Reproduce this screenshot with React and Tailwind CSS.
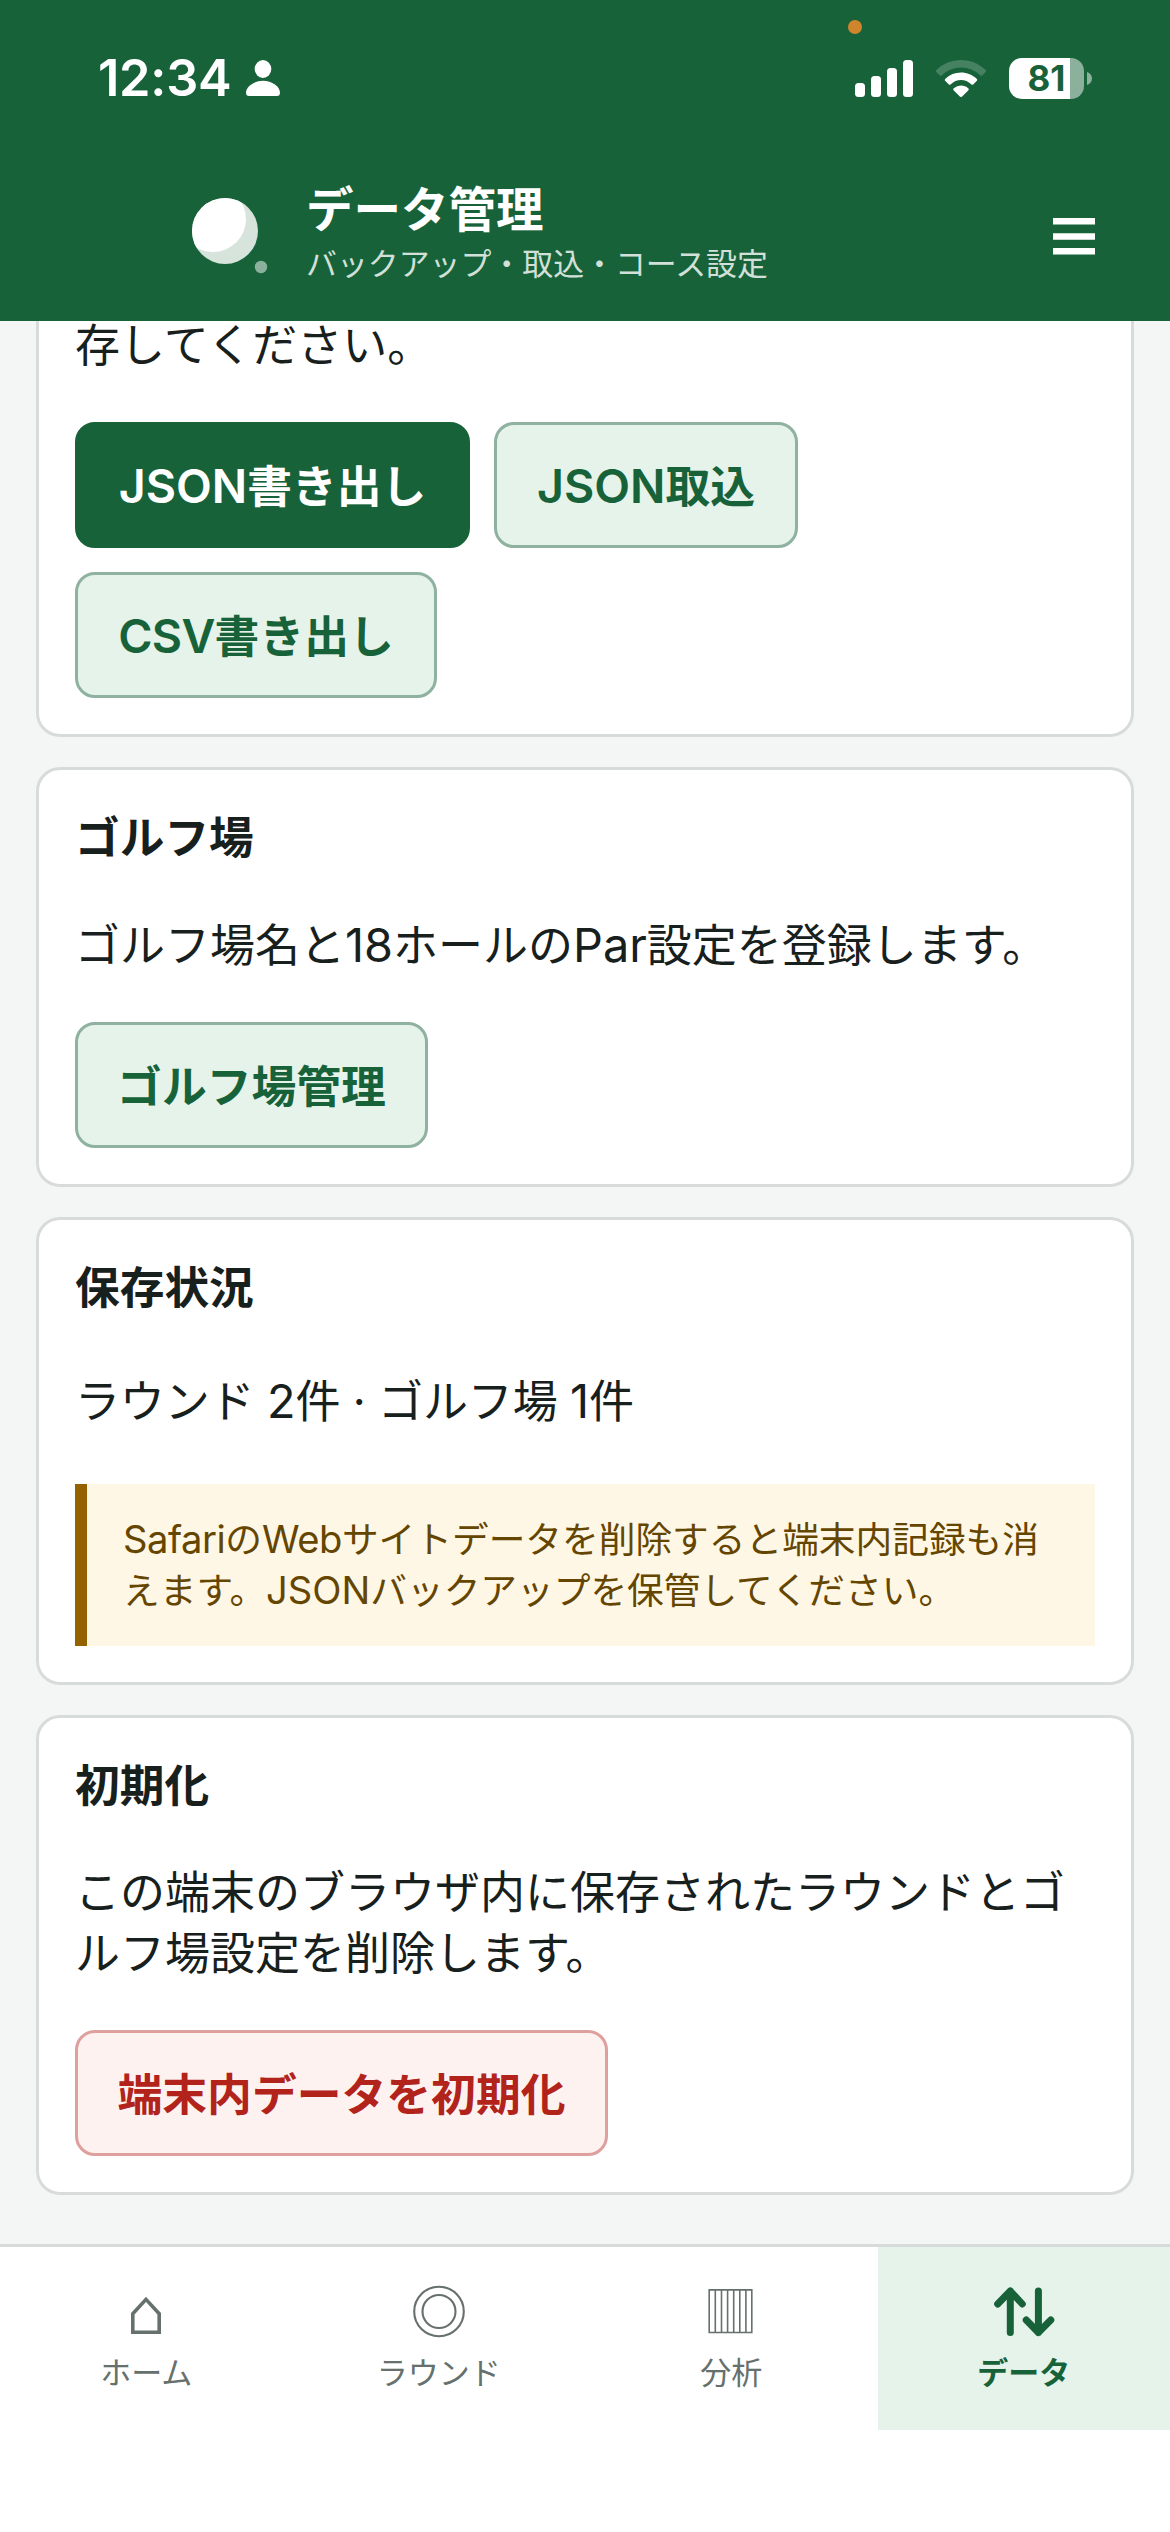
import React from 'react';

const Card = ({ title, children }) => (
  <section className="mb-[30px] flex flex-col items-start rounded-[24px] border-[3px] border-[#d7dcda] bg-white p-[36px]">
    {title && <h2 className="mt-[8px] h-[48px] text-[44.700px] leading-[48px] font-bold">{title}</h2>}
    {children}
  </section>
);

// Latin runs are set slightly larger than the kana around them
const Latin = ({ className = '', children }) => <span className={`text-[1.04em] ${className}`}>{children}</span>;

const variants = {
  primary: 'border-[#18623a] bg-[#18623a] text-white',
  secondary: 'border-[#8fb19f] bg-[#e5f3ea] text-[#18623a]',
  danger: 'border-[#dda09d] bg-[#fef2f0] text-[#b1231b]',
};

const Button = ({ variant = 'secondary', className, children }) => (
  <button
    className={`h-[126px] rounded-[20px] border-[3px] pt-[3px] text-[44.800px] leading-[60px] font-semibold whitespace-nowrap ${variants[variant]} ${className}`}
  >
    {children}
  </button>
);

const StatusBar = () => (
  <div className="relative flex h-[156px] items-center justify-between pr-[78px] pl-[98px]">
    <span className="absolute top-[20px] left-[848px] h-[14px] w-[14px] rounded-full bg-[#d0852c]" />
    <div className="flex items-center gap-[15px]">
      <span className="font-[Inter] text-[50.500px] leading-[60px] font-semibold tracking-[-0.005em]">12:34</span>
      <svg className="h-[36px] w-[34px]" viewBox="0 0 34 36" fill="currentColor">
        <ellipse cx="17" cy="9" rx="8.3" ry="9" />
        <path d="M17 20.7c9 0 17 6 17 12 0 2-1 3.3-3 3.3H3c-2 0-3-1.300-3-3.300 0-6 8-12 17-12z" />
      </svg>
    </div>
    <div className="flex items-center">
      <svg className="h-[37px] w-[58px]" viewBox="0 0 58 37" fill="currentColor">
        <rect x="0" y="23" width="10" height="14" rx="3.500" />
        <rect x="16" y="16" width="10" height="21" rx="3.500" />
        <rect x="32" y="8" width="10" height="29" rx="3.500" />
        <rect x="48" y="0" width="10" height="37" rx="3.500" />
      </svg>
      <svg className="ml-[23px] h-[37px] w-[50px]" viewBox="0 0 50 37" fill="currentColor">
        <path opacity=".2" d="M25 0c9.500 0 18 3.700 24.400 9.800.8.800.8 1.700 0 2.500l-3 3c-.7.700-1.500.7-2.200 0A28 28 0 0 0 25 7.500 28 28 0 0 0 5.800 15.300c-.7.700-1.500.7-2.200 0l-3-3c-.8-.8-.8-1.700 0-2.500A35 35 0 0 1 25 0z" />
        <path d="M25 12.500c6 0 11.500 2.400 15.600 6.200.8.700.8 1.600 0 2.300l-3.200 3.200c-.7.700-1.500.7-2.200 0A15 15 0 0 0 25 20a15 15 0 0 0-10.200 4.200c-.7.700-1.500.7-2.200 0L9.400 21c-.8-.7-.8-1.600 0-2.300A23 23 0 0 1 25 12.500z" />
        <path d="M25 25.500c2.800 0 5.300 1 7.200 2.700.8.700.8 1.500 0 2.200L26.200 36.500c-.8.700-1.600.7-2.400 0l-6-6.100c-.8-.7-.8-1.500 0-2.200a10.800 10.800 0 0 1 7.200-2.700z" />
      </svg>
      <div className="ml-[23px] flex h-[41px] w-[75px] items-center justify-center overflow-hidden rounded-[13px] bg-[linear-gradient(to_right,#fff_61px,#8bb09c_61px)] font-[Inter] text-[35px] leading-none font-bold text-[#18623a]">
        81
      </div>
      <svg className="ml-[3px] h-[13px] w-[5px]" viewBox="0 0 5 13" fill="#8bb09c">
        <path d="M0 0c3 1 5 3.500 5 6.500S3 12 0 13z" />
      </svg>
    </div>
  </div>
);

const Header = () => (
  <header className="relative z-10 h-[321px] bg-[#18623a] text-white">
    <StatusBar />
    <div className="flex pr-[75px] pl-[192px]">
      <svg className="mt-[42px] h-[76px] w-[76px]" viewBox="0 0 76 76">
        <defs>
          <clipPath id="ball">
            <circle cx="33" cy="33" r="33" />
          </clipPath>
        </defs>
        <circle cx="33" cy="33" r="33" fill="#d6e4dc" />
        <circle cx="21" cy="21" r="33" fill="#fff" clipPath="url(#ball)" />
        <circle cx="69" cy="69" r="6.200" fill="#8bb09c" />
      </svg>
      <div className="ml-[38px] flex-1 pt-[24px]">
        <h1 className="text-[47.500px] leading-[60px] font-bold">データ管理</h1>
        <p className="mt-[2px] text-[30.900px] leading-[44px] text-[#d1e0d8]">バックアップ・取込・コース設定</p>
      </div>
      <svg className="mt-[62px] h-[37px] w-[42px]" viewBox="0 0 42 37" fill="currentColor">
        <path d="M0 0h42v6.500H0zM0 15.200h42v6.500H0zM0 30h42v6.500H0z" />
      </svg>
    </div>
  </header>
);

const tabs = [
  {
    label: 'ホーム',
    icon: (
      <path d="M26 15.400 39.200 29.700v18.500H12.800V29.700z" fill="none" stroke="currentColor" strokeWidth="3.600" />
    ),
  },
  {
    label: 'ラウンド',
    icon: (
      <g fill="none" stroke="currentColor" strokeWidth="2.100">
        <circle cx="26" cy="27.500" r="24.800" />
        <circle cx="26" cy="27.500" r="16.500" />
      </g>
    ),
  },
  {
    label: '分析',
    icon: (
      <path
        d="M4.200 5.900h42.600v42.600H4.200zM10.300 5.900v42.600M16.500 5.900v42.600M22.600 5.900v42.600M28.700 5.900v42.600M34.800 5.900v42.600M40.900 5.900v42.600"
        fill="none"
        stroke="currentColor"
        strokeWidth="1.600"
      />
    ),
  },
  {
    label: 'データ',
    active: true,
    icon: (
      <path
        d="M12.300 48.500V7M-.3 20 12.300 7l12 13M40.400 7v41.500M28.200 36l12.200 12.500L52.800 36"
        fill="none"
        stroke="currentColor"
        strokeWidth="7"
        strokeLinecap="round"
        strokeLinejoin="round"
      />
    ),
  },
];

const TabBar = () => (
  <nav className="relative z-10 h-[288px] border-t-[3px] border-[#d7dcda] bg-white">
    <div className="grid h-[183px] grid-cols-4">
      {tabs.map((tab) => (
        <div
          key={tab.label}
          className={`flex flex-col items-center pt-[37px] ${
            tab.active ? 'bg-[#e5f3ea] font-bold text-[#18623a]' : 'text-[#66706c]'
          }`}
        >
          <svg className="h-[56px] w-[52px] overflow-visible" viewBox="0 0 52 56">
            {tab.icon}
          </svg>
          <span className="mt-[13px] text-[31px] leading-[40px]">{tab.label}</span>
        </div>
      ))}
    </div>
  </nav>
);

export default function App() {
  return (
    <div className="flex h-[2532px] w-[1170px] flex-col overflow-hidden bg-[#f4f6f5] font-[Inter,'Noto_Sans_CJK_JP',sans-serif] text-[#17201c]">
      <Header />
      <main className="-mt-[60px] h-[1983px] px-[36px]">
        <Card>
          <p className="mt-[16px] h-[70px] text-[45px] leading-[60px]">存してください。</p>
          <div className="mt-[36px] flex flex-wrap gap-[24px]">
            <Button variant="primary" className="w-[395px]"><Latin>JSON</Latin>書き出し</Button>
            <Button className="w-[304px]"><Latin>JSON</Latin>取込</Button>
            <Button className="w-[362px]"><Latin className="tracking-[-0.015em]">CSV</Latin>書き出し</Button>
          </div>
        </Card>

        <Card title="ゴルフ場">
          <p className="mt-[53px] h-[107px] text-[45px] leading-[61px] whitespace-nowrap">
            ゴルフ場名と<Latin>18</Latin>ホールの<Latin>Par</Latin>設定を登録します。
          </p>
          <Button className="w-[353px]">ゴルフ場管理</Button>
        </Card>

        <Card title="保存状況">
          <p className="mt-[59px] h-[113px] text-[45px] leading-[61px] tracking-[-0.003em]">
            ラウンド <Latin>2</Latin>件 · ゴルフ場 <Latin>1</Latin>件
          </p>
          <div className="w-full border-l-[12px] border-[#946200] bg-[#fff7e5] py-[30px] pl-[36px] text-[36.700px] leading-[51px] whitespace-nowrap text-[#654600]">
            <p className="h-[51px]">
              <Latin className="tracking-[-0.012em]">Safari</Latin>の
              <Latin className="tracking-[-0.012em]">Web</Latin>サイトデータを削除すると端末内記録も消
            </p>
            <p className="h-[51px]">えます。<Latin>JSON</Latin>バックアップを保管してください。</p>
          </div>
        </Card>

        <Card title="初期化">
          <p className="mt-[52px] h-[168px] text-[45px] leading-[61px] whitespace-nowrap">
            この端末のブラウザ内に保存されたラウンドとゴ
            <br />
            ルフ場設定を削除します。
          </p>
          <Button variant="danger" className="w-[533px]">端末内データを初期化</Button>
        </Card>
      </main>
      <TabBar />
    </div>
  );
}
